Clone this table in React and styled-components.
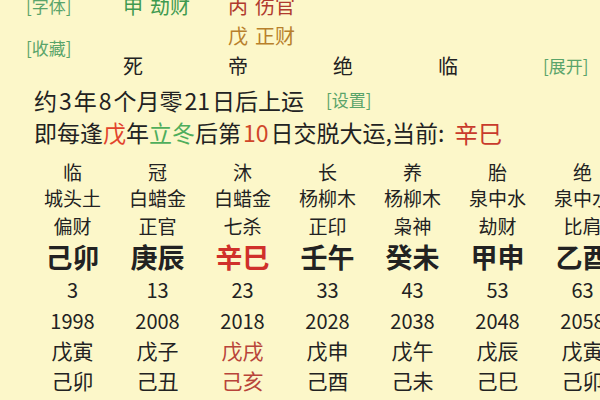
import React from "react";
import styled, { createGlobalStyle } from "styled-components";

const Global = createGlobalStyle`
  html, body { margin: 0; padding: 0; background: #fcf7c9; }
  body { font-family: "Noto Sans CJK SC", "Noto Sans", sans-serif; }
`;

const Page = styled.div`
  width: 600px;
  height: 400px;
  overflow: hidden;
  background: #fcf7c9;
  color: #222;
  font-family: "Noto Sans CJK SC", "Noto Sans", sans-serif;
`;

const Header = styled.div`
  display: grid;
  grid-template-columns: repeat(6, 105px);
  grid-template-rows: repeat(3, 30px);
  margin-top: -9px;
  padding-left: 18px;
`;

const SideLinks = styled.div`
  grid-column: 1;
  grid-row: 1 / span 3;
  display: flex;
  flex-direction: column;
  align-items: flex-start;
  gap: 18px;
  padding-left: 8px;
  padding-top: 3px;
`;

const Link = styled.span`
  font-size: 17px;
  line-height: 24px;
  color: #5aa46a;
  white-space: nowrap;
`;

const Cell = styled.div`
  grid-column: ${(p) => p.$col};
  grid-row: ${(p) => p.$row};
  display: flex;
  align-items: center;
  gap: 7px;
  font-size: 20px;
  line-height: 30px;
  color: ${(p) => p.$color || "#222"};
  white-space: nowrap;
`;

const Info = styled.div`
  padding: 3px 0 0 34px;
  display: flex;
  flex-direction: column;
`;

const InfoLine = styled.div`
  display: flex;
  align-items: center;
  gap: ${(p) => p.$gap || 0}px;
  height: 32px;
  font-size: 23px;
  white-space: nowrap;
  color: #222;
`;

const Num = styled.span`
  margin: 0 2px;
  color: ${(p) => p.$color || "inherit"};
`;

const Hi = styled.span`
  color: ${(p) => p.$color};
  font-size: ${(p) => (p.$size ? `${p.$size}px` : "inherit")};
  margin-left: ${(p) => p.$ml || 0}px;
`;

const Table = styled.div`
  display: grid;
  grid-template-columns: repeat(7, 85px);
  grid-template-rows: 26px 27px 29px 32px 35px 27px 31px 29px;
  grid-auto-flow: column;
  margin-top: 10px;
  padding-left: 30px;
`;

const TCell = styled.div`
  display: flex;
  align-items: center;
  justify-content: center;
  white-space: nowrap;
  font-size: ${(p) => p.$size}px;
  font-weight: ${(p) => (p.$bold ? 700 : 400)};
  color: ${(p) => p.$color || "#222"};
`;

const RED = "#c83a2c";

const cols = [
  ["临", "城头土", "偏财", "己卯", "3", "1998", "戊寅", "己卯"],
  ["冠", "白蜡金", "正官", "庚辰", "13", "2008", "戊子", "己丑"],
  ["沐", "白蜡金", "七杀", "辛巳", "23", "2018", "戊戌", "己亥", true],
  ["长", "杨柳木", "正印", "壬午", "33", "2028", "戊申", "己酉"],
  ["养", "杨柳木", "枭神", "癸未", "43", "2038", "戊午", "己未"],
  ["胎", "泉中水", "劫财", "甲申", "53", "2048", "戊辰", "己巳"],
  ["绝", "泉中水", "比肩", "乙酉", "63", "2058", "戊寅", "己卯"],
];

const sizes = [19, 19, 19, 27, 20, 20, 21, 21];

export default function App() {
  return (
    <Page>
      <Global />
      <Header>
        <SideLinks>
          <Link>[字体]</Link>
          <Link>[收藏]</Link>
        </SideLinks>
        <Cell $col={2} $row={1} $color="#3f9a50">
          <span>申</span>
          <span>劫财</span>
        </Cell>
        <Cell $col={3} $row={1} $color="#b03a2e">
          <span>丙</span>
          <span>伤官</span>
        </Cell>
        <Cell $col={3} $row={2} $color="#b8802c">
          <span>戊</span>
          <span>正财</span>
        </Cell>
        <Cell $col={2} $row={3}>死</Cell>
        <Cell $col={3} $row={3}>帝</Cell>
        <Cell $col={4} $row={3}>绝</Cell>
        <Cell $col={5} $row={3}>临</Cell>
        <Cell $col={6} $row={3}>
          <Link>[展开]</Link>
        </Cell>
      </Header>
      <Info>
        <InfoLine $gap={22}>
          <span>
            约<Num>3</Num>年<Num>8</Num>个月零<Num>21</Num>日后上运
          </span>
          <Link>[设置]</Link>
        </InfoLine>
        <InfoLine>
          <span>即每逢</span>
          <Hi $color="#e2432c">戊</Hi>
          <span>年</span>
          <Hi $color="#4fae5c">立冬</Hi>
          <span>后第</span>
          <Num $color="#d0462a">10</Num>
          <span>日交脱大运,当前:</span>
          <Hi $color={RED} $size={24} $ml={10}>辛巳</Hi>
        </InfoLine>
      </Info>
      <Table>
        {cols.map((c, ci) =>
          c.slice(0, 8).map((t, ri) => {
            const isRed = (ri === 3 || ri >= 6) && c[8];
            const color = isRed ? (ri === 3 ? "#d0302a" : "#b8443a") : undefined;
            return (
              <TCell key={`${ci}-${ri}`} $size={sizes[ri]} $bold={ri === 3} $color={color}>
                {t}
              </TCell>
            );
          })
        )}
      </Table>
    </Page>
  );
}
